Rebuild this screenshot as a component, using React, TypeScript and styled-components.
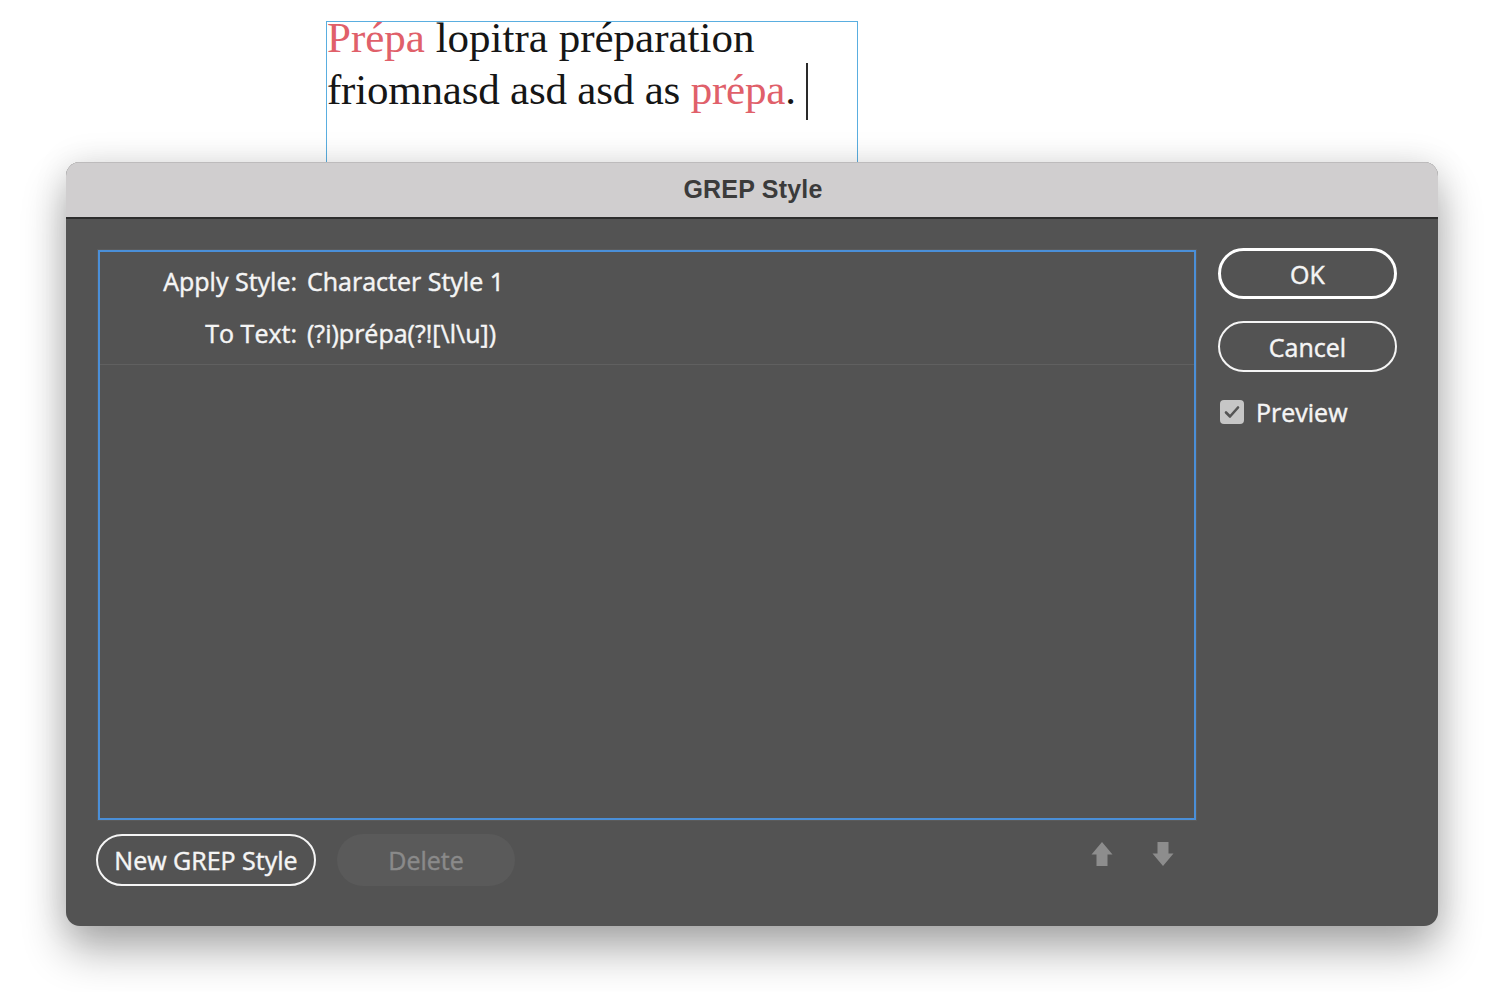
import React from "react";
import styled, { createGlobalStyle } from "styled-components";

const Global = createGlobalStyle`
  html, body { margin: 0; padding: 0; background: #ffffff; }
  body { width: 1498px; height: 992px; overflow: hidden; }
  #root { width: 1498px; height: 992px; }
`;

const Page = styled.div`
  width: 1498px;
  height: 992px;
  background: #ffffff;
  display: flex;
  flex-direction: column;
  overflow: hidden;
`;

const TextFrame = styled.div`
  margin: 21px 0 0 326px;
  width: 530px;
  height: 140px;
  border: 1px solid #5aaee0;
  border-bottom: none;
`;

const Story = styled.p`
  margin: -9px 0 0 0;
  font-family: "Liberation Serif", "Times New Roman", serif;
  font-size: 43px;
  line-height: 50px;
  color: #161616;
  white-space: nowrap;
`;

const Line = styled.span<{ $tight?: boolean }>`
  letter-spacing: ${(p) => (p.$tight ? "-0.2px" : "0")};
`;

const Hit = styled.span`
  color: #e0606a;
`;

const Caret = styled.span`
  display: inline-block;
  width: 2px;
  height: 57px;
  margin-left: 10px;
  vertical-align: -16px;
  background: #2a2a2a;
`;

const Dialog = styled.div`
  position: relative;
  z-index: 1;
  margin-left: 66px;
  width: 1372px;
  height: 764px;
  border-radius: 14px;
  background: #535353;
  box-shadow: 0 24px 44px rgba(0, 0, 0, 0.32), 0 0 34px rgba(0, 0, 0, 0.1);
  display: flex;
  flex-direction: column;
  overflow: hidden;
  font-family: "Open Sans", "Liberation Sans", sans-serif;
`;

const TitleBar = styled.div`
  height: 55px;
  flex: none;
  background: #d0cecf;
  border-bottom: 2px solid #2d2d2d;
  box-shadow: inset 0 1px 0 #bdbbbc;
  display: flex;
  align-items: center;
  justify-content: center;
  font-family: "Liberation Sans", Arial, sans-serif;
  font-weight: 700;
  font-size: 25px;
  color: #3b3b3b;
  letter-spacing: 0.2px;
  padding-left: 2px;
`;

const Body = styled.div`
  flex: 1;
  display: grid;
  grid-template-columns: 1098px 179px;
  grid-template-rows: 570px auto;
  align-content: start;
  column-gap: 22px;
  row-gap: 14px;
  padding: 31px 41px 0 32px;
`;

const List = styled.div`
  border: 2px solid #4a8fd8;
  box-shadow: 0 0 0 1px #5b5b5b;
  display: flex;
  flex-direction: column;
`;

const Entry = styled.div`
  display: grid;
  grid-template-columns: 197px 1fr;
  grid-auto-rows: 52px;
  column-gap: 10px;
  padding-top: 3px;
  padding-bottom: 5px;
  border-bottom: 1px solid #606060;
  color: #f5f5f5;
  font-size: 25px;
  -webkit-text-stroke: 0.45px #f5f5f5;
  align-items: center;
`;

const Label = styled.span`
  text-align: right;
  white-space: nowrap;
`;

const Value = styled.span`
  white-space: nowrap;
`;

const Side = styled.div`
  display: flex;
  flex-direction: column;
  gap: 22px;
  margin-top: -2px;
`;

const PillButton = styled.button<{ $primary?: boolean; $disabled?: boolean; $w?: number }>`
  box-sizing: border-box;
  height: ${(p) => (p.$w ? "52px" : "51px")};
  width: ${(p) => (p.$w ? `${p.$w}px` : "auto")};
  border-radius: 26px;
  border: ${(p) => (p.$disabled ? "none" : p.$primary ? "3px solid #ffffff" : "2px solid #f5f5f5")};
  background: ${(p) => (p.$disabled ? "#5a5a5a" : "transparent")};
  color: ${(p) => (p.$disabled ? "#8a8a8a" : "#f5f5f5")};
  -webkit-text-stroke: 0.45px ${(p) => (p.$disabled ? "#8a8a8a" : "#f5f5f5")};
  font-family: "Open Sans", "Liberation Sans", sans-serif;
  font-size: 25px;
  white-space: nowrap;
  padding: 0;
  display: flex;
  align-items: center;
  justify-content: center;
  cursor: default;
`;

const CheckRow = styled.label`
  display: flex;
  align-items: center;
  gap: 12px;
  margin-top: 1px;
  padding-left: 2px;
  color: #f5f5f5;
  -webkit-text-stroke: 0.45px #f5f5f5;
  font-size: 25px;
`;

const CheckBox = styled.span`
  width: 24px;
  height: 24px;
  border-radius: 4px;
  background: #c6c6c6;
  display: flex;
  align-items: center;
  justify-content: center;
`;

const Footer = styled.div`
  grid-column: 1 / 2;
  display: flex;
  align-items: center;
  gap: 21px;
  margin-left: -2px;
`;

const Arrows = styled.div`
  margin-left: auto;
  margin-right: 22px;
  display: flex;
  gap: 39px;
  align-items: center;
  margin-top: -12px;
`;

const ArrowIcon = ({ down }: { down?: boolean }) => (
  <svg width="22" height="24" viewBox="0 0 22 24" style={down ? { transform: "rotate(180deg)" } : undefined}>
    <path d="M11 0 L21.5 12.5 L16.5 12.5 L16.5 24 L5.5 24 L5.5 12.5 L0.5 12.5 Z" fill="#8d8d8d" />
  </svg>
);

export default function App() {
  return (
    <Page>
      <Global />
      <TextFrame>
        <Story>
          <Line>
            <Hit>Prépa</Hit> lopitra préparation
          </Line>
          <br />
          <Line $tight>
            friomnasd asd asd as <Hit>prépa</Hit>.
          </Line>
          <Caret />
        </Story>
      </TextFrame>
      <Dialog>
        <TitleBar>GREP Style</TitleBar>
        <Body>
          <List>
            <Entry>
              <Label>Apply Style:</Label>
              <Value>Character Style 1</Value>
              <Label>To Text:</Label>
              <Value>(?i)prépa(?![\l\u])</Value>
            </Entry>
          </List>
          <Side>
            <PillButton $primary>OK</PillButton>
            <PillButton>Cancel</PillButton>
            <CheckRow>
              <CheckBox>
                <svg width="16" height="14" viewBox="0 0 16 14">
                  <path d="M2 7.5 L6 11.5 L14 2.5" fill="none" stroke="#555555" strokeWidth="2.6" strokeLinecap="round" strokeLinejoin="round" />
                </svg>
              </CheckBox>
              Preview
            </CheckRow>
          </Side>
          <Footer>
            <PillButton $w={220}>New GREP Style</PillButton>
            <PillButton $disabled $w={178}>Delete</PillButton>
            <Arrows>
              <ArrowIcon />
              <ArrowIcon down />
            </Arrows>
          </Footer>
        </Body>
      </Dialog>
    </Page>
  );
}
